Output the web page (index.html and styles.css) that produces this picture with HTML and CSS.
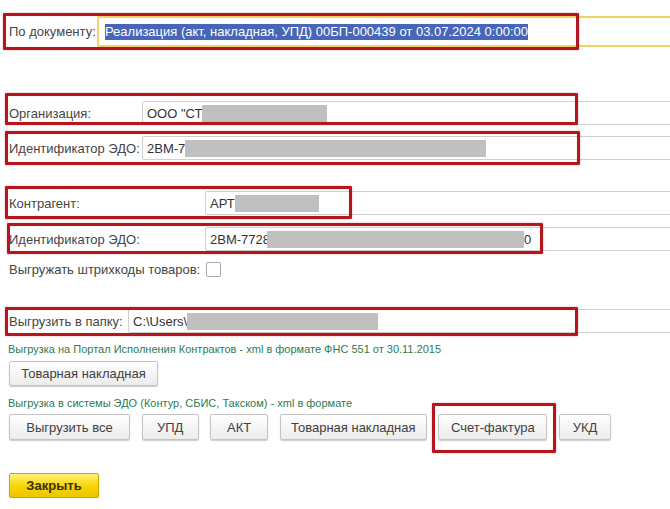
FILE: index.html
```html
<!DOCTYPE html>
<html lang="ru">
<head>
    <meta charset="UTF-8">
    <title>Выгрузка документа</title>
    <link rel="stylesheet" href="styles.css">
</head>
<body>
    <div class="form">
        <div class="row row-doc">
            <span class="label label-doc">По документу:</span>
            <div class="field field-focus"><span class="sel">Реализация (акт, накладная, УПД) 00БП-000439 от 03.07.2024 0:00:00</span></div>
            <span class="mark mark-doc"></span>
        </div>

        <div class="row row-org">
            <span class="label label-org">Организация:</span>
            <div class="field">ООО "СТ<span class="hide" style="width: 125px"></span></div>
            <span class="mark mark-org"></span>
        </div>
        <div class="row row-id">
            <span class="label label-org">Идентификатор ЭДО:</span>
            <div class="field">2ВМ-7<span class="hide" style="width: 301px"></span></div>
            <span class="mark mark-id"></span>
        </div>

        <div class="row row-ka">
            <span class="label label-ka">Контрагент:</span>
            <div class="field">АРТ<span class="hide" style="width: 84px"></span></div>
            <span class="mark mark-ka"></span>
        </div>
        <div class="row row-kaid">
            <span class="label label-ka">Идентификатор ЭДО:</span>
            <div class="field">2ВМ-7728<span class="hide hide-over" style="width: 257px"></span>0</div>
            <span class="mark mark-kaid"></span>
        </div>
        <div class="row row-check">
            <span class="label label-ka">Выгружать штрихкоды товаров:</span>
            <span class="check"></span>
        </div>

        <div class="row row-dir">
            <span class="label label-dir">Выгрузить в папку:</span>
            <div class="field">C:\Users\<span class="hide" style="width: 191px"></span></div>
            <span class="mark mark-dir"></span>
        </div>

        <div class="note note-pik">Выгрузка на Портал Исполнения Контрактов - xml в формате ФНС 551 от 30.11.2015</div>
        <div class="buttons buttons-pik">
            <button class="btn btn-tn">Товарная накладная</button>
        </div>

        <div class="note note-edo">Выгрузка в системы ЭДО (Контур, СБИС, Такском) - xml в формате</div>
        <div class="buttons buttons-edo">
            <button class="btn btn-all">Выгрузить все</button>
            <button class="btn btn-upd">УПД</button>
            <button class="btn btn-akt">АКТ</button>
            <button class="btn btn-tn">Товарная накладная</button>
            <button class="btn btn-sf">Счет-фактура<span class="mark mark-sf"></span></button>
            <button class="btn btn-ukd">УКД</button>
        </div>

        <div class="buttons buttons-close">
            <button class="btn btn-close">Закрыть</button>
        </div>
    </div>
</body>
</html>
```

FILE: styles.css
```css
body
{
    margin: 0;
    font-family: "Liberation Sans", Arial, sans-serif;
    font-size: 13px;
    color: #454545;
    background: #fff;
    overflow: hidden;
}
.form
{
    width: 690px;
    padding-left: 9px;
}
.row
{
    position: relative;
    display: flex;
    align-items: center;
    height: 24px;
}
.row-doc { margin-top: 16px; height: 31px; }
.row-org { margin-top: 54px; }
.row-id { margin-top: 11px; }
.row-ka { margin-top: 31px; }
.row-kaid { margin-top: 12px; }
.row-check { margin-top: 11px; height: 15px; }
.row-dir { margin-top: 32px; }

.label
{
    flex: none;
    white-space: nowrap;
}
.label-doc { width: 88px; }
.label-org { width: 133px; }
.label-ka { width: 196px; }
.label-dir { width: 119px; }

.field
{
    flex: 1;
    box-sizing: border-box;
    height: 100%;
    display: flex;
    align-items: center;
    padding-left: 4px;
    border: 1px solid #cfcfcf;
    border-radius: 2px;
    color: #333;
    white-space: nowrap;
}
.field-focus
{
    border: 2px solid #f0d468;
    padding-left: 6px;
}
.sel
{
    background: #4766b8;
    color: #fff;
    line-height: 16px;
}
.hide
{
    display: inline-block;
    height: 17px;
    background: #c0c0c0;
}
.hide-over
{
    margin-left: -3px;
}
.check
{
    box-sizing: border-box;
    width: 15px;
    height: 15px;
    margin-left: 1px;
    border: 1px solid #a8a8a8;
    border-radius: 2px;
    background: #fff;
}

/* красные рамки выделения */
.mark
{
    position: absolute;
    box-sizing: border-box;
    border: 3px solid #b3161d;
    border-radius: 1px;
    box-shadow: 0 0 2px rgba(200, 40, 40, 0.45), inset 0 0 1px rgba(200, 40, 40, 0.4);
    pointer-events: none;
}
.mark-doc { left: -6px; top: -3px; width: 576px; height: 37px; }
.mark-org { left: -4px; top: -8px; width: 573px; height: 32px; }
.mark-id { left: -4px; top: -5px; width: 575px; height: 34px; }
.mark-ka { left: -4px; top: -5px; width: 347px; height: 33px; }
.mark-kaid { left: -2px; top: -4px; width: 536px; height: 31px; }
.mark-dir { left: -4px; top: -2px; width: 573px; height: 29px; }
.mark-sf { left: -7px; top: -12px; width: 124px; height: 50px; }

.note
{
    font-size: 11px;
    line-height: 14px;
    color: #2d7a50;
    margin-left: -1px;
}
.note-pik { margin-top: 9px; }
.note-edo { margin-top: 10px; }

.buttons
{
    display: flex;
    gap: 11.6px;
}
.buttons-pik { margin-top: 5px; }
.buttons-edo { margin-top: 4px; }
.buttons-close { margin-top: 33px; }

.btn
{
    position: relative;
    box-sizing: border-box;
    height: 26px;
    padding: 0;
    font-family: "Liberation Sans", Arial, sans-serif;
    font-size: 13px;
    color: #404040;
    background: linear-gradient(#ffffff, #ececec);
    border: 1px solid #c4c4c4;
    border-radius: 2px;
    box-shadow: 0 1px 1px rgba(0, 0, 0, 0.2);
}
.buttons-pik .btn { height: 25px; width: 149px; }
.btn-tn { width: 147px; }
.btn-all { width: 121px; }
.btn-upd { width: 57px; }
.btn-akt { width: 58px; }
.btn-sf { width: 109px; }
.btn-ukd { width: 52px; }
.btn-close
{
    width: 90px;
    height: 25px;
    font-weight: bold;
    color: #3a3000;
    background: linear-gradient(#fff27a, #f6d400 55%, #ecc400);
    border-color: #c7a800;
}
```
